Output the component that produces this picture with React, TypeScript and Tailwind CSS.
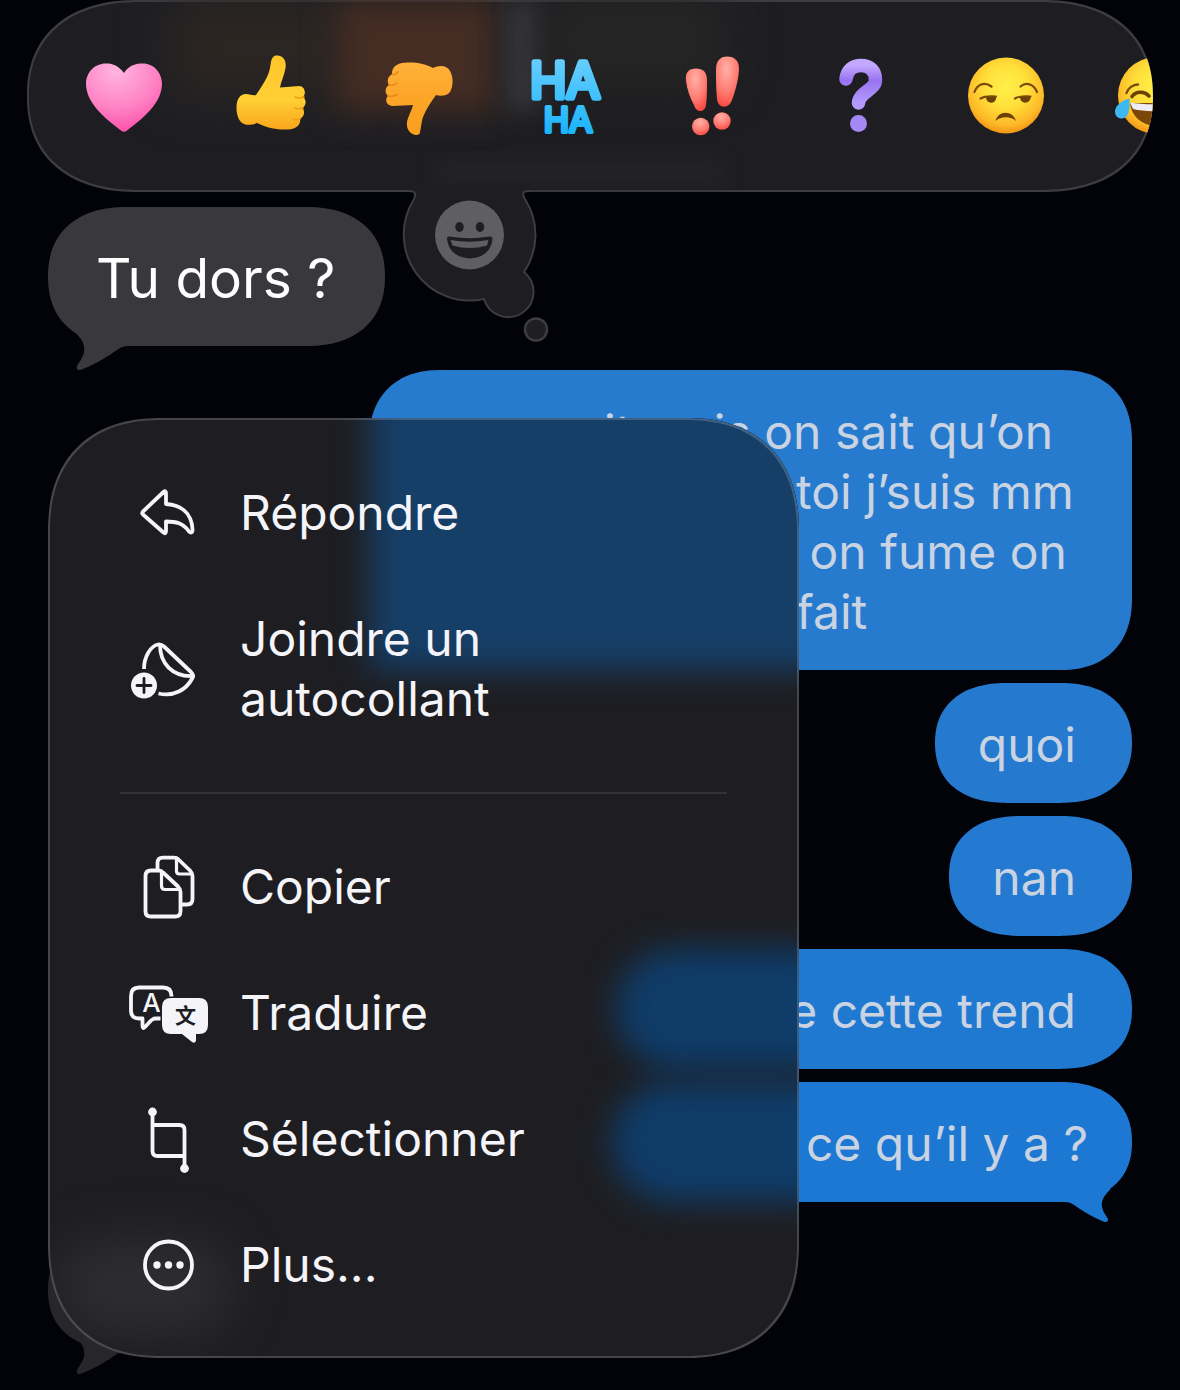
import type { ReactNode } from 'react';

interface TailProps {
    className: string;
}

interface BubbleProps {
    children?: ReactNode;
    className?: string;
    tail?: boolean;
}

interface MenuItemProps {
    label: string;
    icon: ReactNode;
}

function Tail({ className }: TailProps) {
    return (
        <svg viewBox="0 0 96 48" className={`absolute ${className}`} fill="currentColor" aria-hidden="true">
            <path d="M34 0 L26 9 C34 17 37 22 36 30 C35 36 31 40 29 44 C28 48 31 49 35 47 C50 41 60 34 69 28 C74 24 78 24 84 24 L84 0 Z" />
        </svg>
    );
}

function SentBubble({ children, className = '', tail = false }: BubbleProps) {
    return (
        <div className={`relative pt-8 pb-7 pl-[43px] text-5xl leading-[60px] text-[#c9d3e2] [corner-shape:superellipse(1.2)] ${className}`}>
            {children}
            {tail && <Tail className="right-0 -bottom-5 w-20 h-10 -scale-x-100 text-[#1c78d2]" />}
        </div>
    );
}

function MenuItem({ label, icon }: MenuItemProps) {
    return (
        <li>
            <button type="button" className="flex w-full items-center gap-6 py-[33px] text-left">
                <svg
                    viewBox="0 0 96 76"
                    className="w-24 h-[76px] -my-2 shrink-0"
                    fill="none"
                    stroke="currentColor"
                    strokeWidth="3.8"
                    strokeLinecap="round"
                    strokeLinejoin="round"
                    aria-hidden="true"
                >
                    {icon}
                </svg>
                <span className="pr-16 text-5xl leading-[60px]">{label}</span>
            </button>
        </li>
    );
}

const replyIcon = (
    <path d="M23 36.5 L43.5 17 Q46 15 46 18.5 V29 C60 30 72 37 72.5 55 C72.5 58 70.5 58 69 56.5 C63 48 56 46.5 46 46.5 V56 Q46 59.5 43.5 57.5 L23 39.5 Q21.5 38 23 36.5 Z" />
);

const stickerIcon = (
    <>
        <path strokeLinecap="butt" d="M24 38 C24 25 31 15 38 13.5 Q41 13 44 15.5 L71 41 Q74 44 72.5 47 C66 59 54 66 38.5 62.5" />
        <path d="M40 14 C40 32 52 46 73 45" />
        <circle cx="24" cy="54.5" r="13" fill="currentColor" stroke="none" />
        <path stroke="#1e1e22" strokeWidth="2.8" d="M24 47.5 V61.5 M17 54.5 H31" />
    </>
);

const copyIcon = (
    <>
        <path d="M37.5 20 V14 Q37.5 8.7 43 8.7 H54 Q56.5 8.7 58.5 10.5 L70 21.5 Q72.5 24 72.5 27 V50 Q72.5 55.5 67 55.5 H62" />
        <path strokeWidth="3.2" d="M56.5 9 V22 Q56.5 25 59.5 25 H72" />
        <path d="M31 21.5 H38.5 Q41 21.5 43 23.5 L58 37.5 Q60.5 40 60.5 43 V62.5 Q60.5 67.5 55 67.5 H31 Q25.5 67.5 25.5 62.5 V27 Q25.5 21.5 31 21.5 Z" />
        <path strokeWidth="3.2" d="M41.5 22 V37 Q41.5 40.5 45 40.5 H60" />
    </>
);

const translateIcon = (
    <>
        <path d="M19 12.5 H43 Q51.5 12.5 51.5 21 V36 Q51.5 43.5 43 43.5 H36 Q33 43.5 31 45.5 L25 52 Q22.5 54.5 22.5 51 V43.5 H19 Q11 43.5 11 36 V21 Q11 12.5 19 12.5 Z" />
        <text x="31.5" y="37" fill="currentColor" stroke="none" fontSize="26" fontWeight="500" fontFamily="Inter, sans-serif" textAnchor="middle">A</text>
        <path
            stroke="#1e1e22"
            strokeWidth="3"
            fill="currentColor"
            paintOrder="stroke"
            d="M51 23 H79 Q88 23 88 32 V50 Q88 59 79 59 H76 V65.5 Q75 69 72 67 L62 59 H51 Q42 59 42 50 V32 Q42 23 51 23 Z"
        />
        <text x="65.5" y="48" fill="#1e1e22" stroke="none" fontSize="21" fontWeight="700" fontFamily="'Noto Sans CJK SC', sans-serif" textAnchor="middle">文</text>
    </>
);

const selectIcon = (
    <>
        <path d="M32.5 11 V50 Q32.5 55 37.5 55 H64" />
        <path d="M64.5 67 V29 Q64.5 24 59.5 24 H33" />
        <circle cx="32.5" cy="11" r="4.4" fill="currentColor" stroke="none" />
        <circle cx="64.5" cy="67.5" r="4.4" fill="currentColor" stroke="none" />
    </>
);

const moreIcon = (
    <>
        <circle cx="48.5" cy="38" r="23.5" />
        <g fill="currentColor" stroke="none">
            <circle cx="37" cy="38" r="3.7" />
            <circle cx="48.5" cy="38" r="3.7" />
            <circle cx="60" cy="38" r="3.7" />
        </g>
    </>
);

const reactions = [
    {
        name: 'Cœur',
        art: (
            <>
                <radialGradient id="heart" cx="0.4" cy="0.12" r="0.95">
                    <stop offset="0" stopColor="#ffb4e0" />
                    <stop offset="0.55" stopColor="#ff83c5" />
                    <stop offset="1" stopColor="#fb4aa4" />
                </radialGradient>
                <path fill="url(#heart)" d="M38 19 C32 11 26 9.5 20 9.5 C8 9.5 0 19 0 30 C0 52 27 70 35 76.5 Q38 79 41 76.5 C49 70 76 52 76 30 C76 19 68 9.5 57 9.5 C50 9.5 43 11 38 19 Z" />
            </>
        ),
    },
    {
        name: 'Pouce levé',
        art: (
            <>
                <linearGradient id="thumb-up" x1="0" y1="0" x2="0" y2="1">
                    <stop offset="0" stopColor="#ffc52b" />
                    <stop offset="0.6" stopColor="#ffcf33" />
                    <stop offset="1" stopColor="#f9a61c" />
                </linearGradient>
                <path fill="url(#thumb-up)" d="M38 8 C39 2 42 1 45 1.5 C51 2.5 53.5 7 52.5 14 C51.5 21 48 27 47 33.5 L66 32 C72 32 73.5 40 70 43 C74 46 73 52 69.5 54 C72.5 58 71 63 67 65 C68 69 65 75 55 75.5 C42 76 32 73 24 69 C19 71 15 71.5 11 70 C6 68 3.5 61 3.5 54 C3.5 45 7 40 13 40 C17 40 20 42 23 41 C27 35 31 29 34 23 C37 17 37 13 38 8 Z" />
                <path fill="none" stroke="#ee9f17" strokeWidth="1.6" strokeLinecap="round" d="M62 43 Q66 45 71 43 M62 54 Q66 56 70 54 M60 64.5 Q63 67 67 65" />
            </>
        ),
    },
    {
        name: 'Pouce baissé',
        art: (
            <>
                <linearGradient id="thumb-down" x1="0" y1="0" x2="0" y2="1">
                    <stop offset="0" stopColor="#ffb13a" />
                    <stop offset="0.5" stopColor="#fca527" />
                    <stop offset="1" stopColor="#fba01f" />
                </linearGradient>
                <path fill="url(#thumb-down)" d="M53 14 C59 11 67 11 70 17 C73.5 23 73.5 32 70 38 C67 42 60 42.5 56 41 C51 48 46 55 43 63 C41 69 41 76 39.5 80 C35 83 28 79 27 72 C26 65 31 59 33 51 L13 52 C7 52 4 46 8 42 C4.5 39 5 33 9 31 C6.5 27 8 22 12 20.5 C11.5 14 16 9 25 8.7 C36 8 46 10 53 14 Z" />
                <path fill="none" stroke="#e98813" strokeWidth="1.6" strokeLinecap="round" d="M8 42 Q13 43 17 40.5 M9 31 Q14 32 17 29 M12 20.5 Q16 21 18 18" />
            </>
        ),
    },
    {
        name: 'Haha',
        art: (
            <>
                <linearGradient id="haha" x1="0" y1="0" x2="0" y2="1">
                    <stop offset="0" stopColor="#6fd0ff" />
                    <stop offset="1" stopColor="#14b2fb" />
                </linearGradient>
                <text
                    fill="url(#haha)"
                    stroke="url(#haha)"
                    strokeWidth="5.5"
                    strokeLinejoin="round"
                    fontFamily="Inter, sans-serif"
                    fontWeight="400"
                    textAnchor="middle"
                >
                    <tspan x="38" y="44" fontSize="49">HA</tspan>
                    <tspan x="41" y="78" fontSize="34" strokeWidth="4">HA</tspan>
                </text>
            </>
        ),
    },
    {
        name: 'Exclamation',
        art: (
            <>
                <radialGradient id="bang" cx="0.45" cy="0.25" r="0.8">
                    <stop offset="0" stopColor="#ffb0a6" />
                    <stop offset="0.6" stopColor="#ff7a70" />
                    <stop offset="1" stopColor="#f9453d" />
                </radialGradient>
                <g fill="url(#bang)">
                    <path d="M12 27 C11 18 15 14.5 22 14.5 C29 14.5 33 18 33 26 C33 36 33 44 32 51 C31 59 22 59 20 51 C16 44 13 35 12 27 Z" />
                    <path d="M42 16 C42 7 46 2.5 53 2.5 C61 2.5 65.5 7 65 16 C64 28 61 38 58 46 C55 55 44 55 43 45 C42 35 42 26 42 16 Z" />
                    <circle cx="26.7" cy="72.5" r="8.7" />
                    <circle cx="48" cy="67" r="8.7" />
                </g>
            </>
        ),
    },
    {
        name: 'Interrogation',
        art: (
            <>
                <linearGradient id="question" x1="0" y1="0" x2="0" y2="1">
                    <stop offset="0" stopColor="#c3a8ff" />
                    <stop offset="0.4" stopColor="#9873ef" />
                    <stop offset="1" stopColor="#b49aff" />
                </linearGradient>
                <path fill="none" stroke="url(#question)" strokeWidth="13.5" strokeLinecap="round" strokeLinejoin="round" d="M25 25 C26 16 32 11.5 40 11.5 C49 11.5 54.5 17 54.5 26 C54.5 36 38 38 37.5 49" />
                <circle cx="37.5" cy="69.5" r="8.5" fill="#a588f6" />
            </>
        ),
    },
    {
        name: 'Blasé',
        art: (
            <>
                <radialGradient id="face" cx="0.5" cy="0.38" r="0.64">
                    <stop offset="0" stopColor="#fff04a" />
                    <stop offset="0.45" stopColor="#ffdf3a" />
                    <stop offset="0.8" stopColor="#fdb827" />
                    <stop offset="1" stopColor="#f08c12" />
                </radialGradient>
                <circle cx="38" cy="41.5" r="38" fill="url(#face)" />
                <g fill="none" stroke="#7a4a08" strokeWidth="2.2" strokeLinecap="round">
                    <path d="M6.5 38 C9 31 16 27 23.5 32.5 M52.5 32.5 C59 27 66 31 69 38" />
                    <path d="M12.5 44.5 C17 42 23 42 28 42.5 M47 44.5 C51 42 57 42 62.5 42.5" />
                </g>
                <g fill="#6b4108">
                    <path d="M18 43 H28 C29 50 18 51 18 43 Z M52 43 H62.5 C63 50 52 51 52 43 Z" />
                    <path d="M27.5 67 C30 56 45 56 48 67 C43 62 33 62 27.5 67 Z" />
                </g>
            </>
        ),
    },
    {
        name: 'Mort de rire',
        art: (
            <>
                <circle cx="41.5" cy="41.5" r="38.5" fill="url(#face)" />
                <path fill="none" stroke="#7a4a08" strokeWidth="2.4" strokeLinecap="round" d="M11.5 39 C13 34 18 30.5 23 30.5" />
                <path fill="none" stroke="#6b4108" strokeWidth="3.6" strokeLinecap="round" d="M17 42.5 C21 37 29 37 34 42" />
                <path fill="#7b4608" d="M15 49 H68 C68 80 18 80 15 49 Z" />
                <path fill="#ececf2" d="M15 48.5 C30 51 50 51 68 48.5 L66 56 C50 58 30 58 18 55 Z" />
                <path fill="#3db8f0" d="M14.5 44.5 C8 46 0 51 0 57.5 C0 62 3 64.5 7 64.5 C14 64 15 55 14.5 44.5 Z" />
            </>
        ),
    },
];

function ReactionBar() {
    return (
        <div className="relative mx-[27px]">
            <div className="relative flex h-48 items-center gap-[71px] overflow-hidden rounded-[112px/96px] bg-[#1e1e22] pl-[59px] shadow-[inset_0_0_0_2px_#3d3d41] [corner-shape:superellipse(1.2)]">
                <div className="absolute left-36 top-0 h-24 w-44 bg-[#2c2623] blur-xl" />
                <div className="absolute left-[310px] top-0 h-28 w-40 bg-[#452d23] blur-lg" />
                <div className="absolute left-[480px] top-0 h-28 w-8 bg-[#36383c] blur-md" />
                <div className="absolute left-[520px] top-0 h-20 w-44 bg-[#262625] blur-xl" />
                <div className="absolute left-[410px] top-40 h-6 w-72 bg-[#232326] blur-sm" />
                {reactions.map(reaction => (
                    <button key={reaction.name} type="button" aria-label={reaction.name} className="relative shrink-0">
                        <svg viewBox="0 0 76 84" className="block w-[76px] h-[84px] overflow-visible" aria-hidden="true">
                            {reaction.art}
                        </svg>
                    </button>
                ))}
            </div>
            {/* thought bubble hanging from the bar, opens the emoji picker */}
            <button type="button" aria-label="Choisir un emoji" className="absolute left-[369px] top-[184px]">
                <svg viewBox="396 184 160 164" className="block w-40 h-[164px]" aria-hidden="true">
                    <path
                        fill="#1e1e22"
                        d="M408 184 V191 C415 191 417 193 413.5 200 A66 66 0 0 0 484 299 A25.3 25.3 0 1 0 524 272 A66 66 0 0 0 525.5 200 C521 193 523 191 530 191 V184 Z"
                    />
                    <path
                        fill="none"
                        stroke="#3d3d41"
                        strokeWidth="2"
                        d="M408 191 C415 191 417 193 413.5 200 A66 66 0 0 0 484 299 A25.3 25.3 0 1 0 524 272 A66 66 0 0 0 525.5 200 C521 193 523 191 530 191"
                    />
                    <circle cx="536" cy="329.5" r="11" fill="#1e1e22" stroke="#3d3d41" strokeWidth="2.5" />
                    <circle cx="469.5" cy="235" r="34.5" fill="#5f5f61" />
                    <g fill="#1e1e22">
                        <ellipse cx="459.5" cy="227" rx="4.2" ry="5" />
                        <ellipse cx="480" cy="227" rx="4.2" ry="5" />
                        <path d="M447 238.5 Q447 236 450 236.5 Q469.5 240 489 236.5 Q492.5 236 492.5 238.5 C491 265 449 265 447 238.5 Z" />
                    </g>
                    <path fill="#5f5f61" d="M450.5 240 Q469.5 243.5 488.5 240 L487 245.5 Q469.5 250.5 452.5 245.5 Z" />
                </svg>
            </button>
        </div>
    );
}

function ContextMenu() {
    return (
        <div className="absolute left-12 top-[418px] w-[751px] max-w-[calc(100%-6rem)] overflow-hidden rounded-[112px] bg-[#1e1e22] px-[72px] pt-8 pb-[30px] text-[#f4f4f9] [corner-shape:superellipse(1.2)]">
            {/* glass tint of the conversation behind */}
            <div className="absolute left-[322px] -right-16 -top-16 h-[316px] bg-[#163f68] blur-lg" />
            <div className="absolute left-[568px] -right-16 top-[531px] h-[120px] rounded-[60px] bg-[#0f3c69] blur-lg" />
            <div className="absolute left-[564px] -right-16 top-[664px] h-[120px] rounded-[60px] bg-[#0f3c69] blur-lg" />
            <div className="absolute left-2 bottom-6 h-24 w-44 rounded-full bg-[#2d2d30] blur-xl" />
            <div className="absolute inset-0 rounded-[112px] shadow-[inset_0_0_0_2px_rgb(255_255_255/0.18)] [corner-shape:superellipse(1.2)]" />
            <ul className="relative">
                <MenuItem label="Répondre" icon={replyIcon} />
                <MenuItem label="Joindre un autocollant" icon={stickerIcon} />
            </ul>
            <hr className="relative my-[30px] border-t-2 border-[#333336]" />
            <ul className="relative">
                <MenuItem label="Copier" icon={copyIcon} />
                <MenuItem label="Traduire" icon={translateIcon} />
                <MenuItem label="Sélectionner" icon={selectIcon} />
                <MenuItem label="Plus..." icon={moreIcon} />
            </ul>
        </div>
    );
}

export default function App() {
    return (
        <main className="relative min-h-screen overflow-hidden bg-[#020209] pb-8 font-['Inter',sans-serif]">
            <ReactionBar />

            <div className="relative ml-12 mt-[15px] w-fit rounded-[80px/70px] bg-[#39393d] pl-12 pr-[50px] pt-9 pb-8 text-[55px] leading-[71px] text-white [corner-shape:superellipse(1.2)]">
                Tu dors ?
                <Tail className="left-0 -bottom-6 w-24 h-12 text-[#39393d]" />
            </div>

            <div className="mt-6 flex flex-col items-end gap-[13px] pr-12">
                <SentBubble className="w-[763px] rounded-[72px] bg-[#277bcf]">
                    <p className="pl-48">it mais on sait qu’on</p>
                    <p className="pl-96">toi j’suis mm</p>
                    <p className="pl-96">&nbsp;on fume on</p>
                    <p className="pl-96">fait</p>
                </SentBubble>
                <SentBubble className="rounded-[72px/60px] bg-[#257acf] pr-14">quoi</SentBubble>
                <SentBubble className="rounded-[72px/60px] bg-[#237ad0] pr-14">nan</SentBubble>
                <SentBubble className="w-[517px] rounded-[72px/60px] bg-[#1f79d1] pr-14 text-right">e cette trend</SentBubble>
                <SentBubble className="w-[522px] rounded-[72px/60px] bg-[#1c78d2] pr-11 text-right" tail>ce qu’il y a ?</SentBubble>
            </div>

            <div className="relative ml-12 mt-7 h-[120px] w-48 rounded-[72px/60px] bg-[#27272b] [corner-shape:superellipse(1.2)]">
                <Tail className="left-0 -bottom-6 w-24 h-12 text-[#27272b]" />
            </div>

            <ContextMenu />
        </main>
    );
}
